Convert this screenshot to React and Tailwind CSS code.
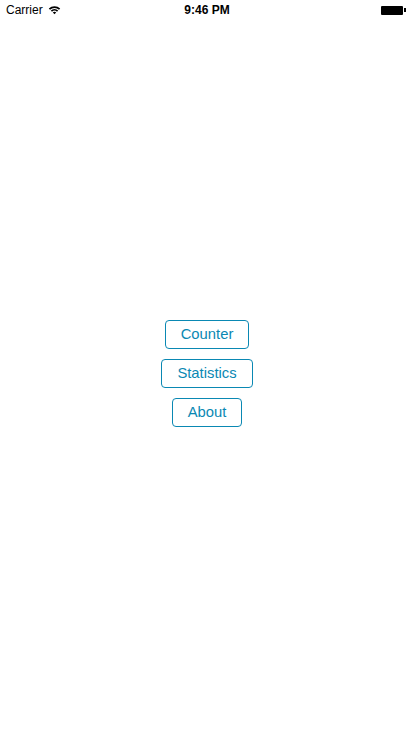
export default function App() {
  const items = ['Counter', 'Statistics', 'About'];
  return (
    <div className="w-[414px] h-[736px] bg-white relative" style={{ fontFamily: '"Liberation Sans", Arial, sans-serif' }}>
      <div className="h-5 flex items-center justify-between px-[6px] text-[12px] text-black">
        <div className="flex items-center gap-1 w-[120px]">
          <span>Carrier</span>
          <svg width="13" height="10" viewBox="0 0 13 10" className="ml-[1px]">
            <path d="M0.8 3.6 A8 8 0 0 1 12.2 3.6 L11 4.8 A6.3 6.3 0 0 0 2 4.8 Z" fill="black" />
            <path d="M2.8 5.6 A5.3 5.3 0 0 1 10.2 5.6 L9 6.8 A3.6 3.6 0 0 0 4 6.8 Z" fill="black" />
            <path d="M4.8 7.6 A2.5 2.5 0 0 1 8.2 7.6 L6.5 9.3 Z" fill="black" />
          </svg>
        </div>
        <span className="font-bold">9:46 PM</span>
        <div className="w-[120px] flex justify-end items-center pr-[2px]">
          <div className="w-[22px] h-[9px] bg-black rounded-[1px]" />
          <div className="w-[2px] h-[4px] bg-black ml-[1px]" />
        </div>
      </div>
      <div className="absolute left-0 right-0 top-[320px] flex flex-col items-center gap-[10px]">
        {items.map((t) => (
          <button
            key={t}
            className="h-[29px] px-[15px] border border-[#0a88b3] rounded-[4px] text-[14.8px] text-[#0a88b3] bg-white"
          >
            {t}
          </button>
        ))}
      </div>
    </div>
  );
}
